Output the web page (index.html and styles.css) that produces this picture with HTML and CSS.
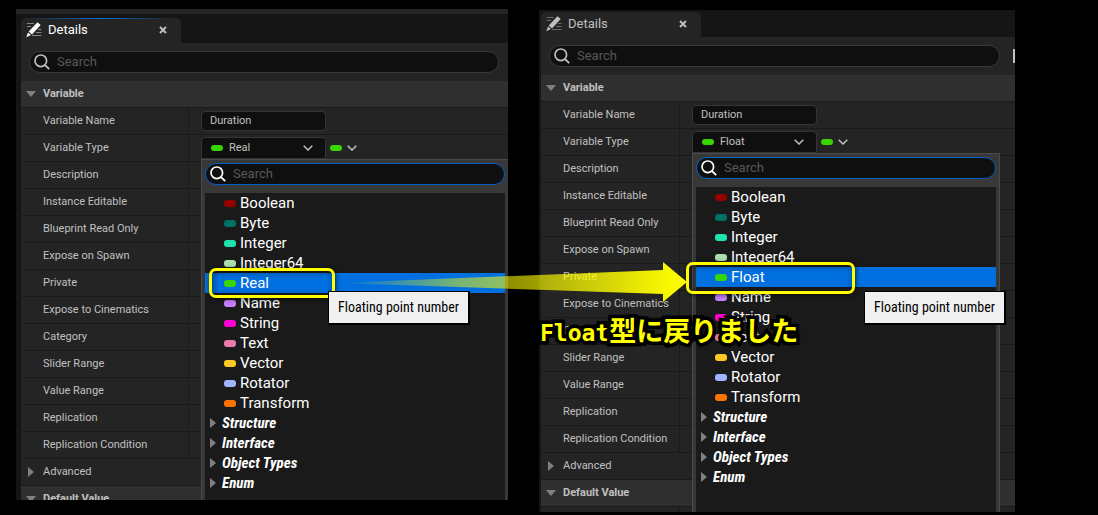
FILE: index.html
```html
<!DOCTYPE html>
<html lang="en">
<head>
<meta charset="utf-8">
<title>Details panels</title>
<link rel="stylesheet" href="styles.css">
<script src="panels.js" defer></script>
</head>
<body>
<svg class="symbols" aria-hidden="true">
  <symbol id="i-details" viewBox="0 0 16 16">
    <path d="M1 1.5h7M1 4.5h4M12 7.5h3.500M10 10.500h5.500M6 13.500h9.500" stroke="currentColor" stroke-width="1.100" opacity=".45"/>
    <path d="M11.500 .2l3.200 2.800-8.700 9.500-3.300-2.900zM2 10.400l3 2.600L.3 15.200z" fill="currentColor"/>
  </symbol>
  <symbol id="i-search" viewBox="0 0 16 16">
    <circle cx="6.800" cy="6.800" r="5.800" fill="none" stroke="currentColor" stroke-width="1.700"/>
    <path d="M10.800 10.800L15.200 15.200" stroke="currentColor" stroke-width="1.900"/>
  </symbol>
  <symbol id="i-close" viewBox="0 0 8 8">
    <path d="M1 1l6 6M7 1L1 7" stroke="currentColor" stroke-width="1.900"/>
  </symbol>
  <symbol id="i-chevron" viewBox="0 0 10 6">
    <path d="M.7.7L5 5 9.300.7" fill="none" stroke="currentColor" stroke-width="1.500"/>
  </symbol>
</svg>
<main class="stage">
  <section class="shot shot-before" data-id="before" data-type="Real" aria-label="Before">
    <div class="panel"></div>
    <div class="tooltip" role="tooltip">Floating point number</div>
  </section>
  <section class="shot shot-after" data-id="after" data-type="Float" aria-label="After">
    <div class="panel"></div>
    <svg class="arrow" viewBox="0 0 352 42" aria-hidden="true">
      <defs>
        <linearGradient id="fade" x1="0" x2="1" y1="0" y2="0">
          <stop offset="0" stop-color="#ff0" stop-opacity="0"/>
          <stop offset=".35" stop-color="#ff0" stop-opacity=".48"/>
          <stop offset=".55" stop-color="#ff0" stop-opacity=".6"/>
          <stop offset=".93" stop-color="#ff0" stop-opacity=".96"/>
          <stop offset="1" stop-color="#ff0"/>
        </linearGradient>
      </defs>
      <path d="M0 22L327 9V1L351 21 327 41V33z" fill="url(#fade)"/>
    </svg>
    <div class="tooltip" role="tooltip">Floating point number</div>
    <p class="caption" lang="ja"><span class="latin">Float</span><span>型に戻りました</span></p>
  </section>
</main>
</body>
</html>
```
FILE: panels.js
```js
const properties = ["Description", "Instance Editable", "Blueprint Read Only", "Expose on Spawn",
  "Private", "Expose to Cinematics", "Category", "Slider Range", "Value Range", "Replication",
  "Replication Condition"];
const groups = ["Structure", "Interface", "Object Types", "Enum"];

const icon = (name) => `<svg class="icon icon-${name}" aria-hidden="true"><use href="#i-${name}"/></svg>`;
const pin = (kind) => `<span class="pin pin-${kind}"></span>`;

const searchBox = (id, label) => `
  <div class="search">${icon("search")}
    <input id="${id}" type="text" placeholder="Search" aria-label="${label}">
  </div>`;

function menu(id, type) {
  const types = ["Boolean", "Byte", "Integer", "Integer64", type, "Name", "String", "Text",
    "Vector", "Rotator", "Transform"];
  const options = types.map((t) => {
    const kind = t === type ? "real" : t.toLowerCase();
    const on = t === type;
    return `<li class="option${on ? " selected" : ""}" role="option" aria-selected="${on}">
      ${pin(kind)}${t}${on ? '<span class="highlight"></span>' : ""}</li>`;
  }).join("");
  const rest = groups.map((g) => `<li class="group" role="option" aria-selected="false"><span class="tri-right"></span>${g}</li>`).join("");
  return `<div class="menu">${searchBox(id + "-types", "Search types")}
    <ul class="options" role="listbox" aria-label="Variable types">${options}${rest}</ul></div>`;
}

function panel(id, type) {
  const row = (label, value = "") => `<div class="row">${label}<div class="value">${value}</div></div>`;
  return `
  <header class="tabs"><div class="tab">${icon("details")}<span>Details</span>
    <button class="close" type="button" aria-label="Close">${icon("close")}</button></div></header>
  <div class="toolbar">${searchBox(id + "-search", "Search details")}<span class="view-button"></span></div>
  <h2 class="category"><span class="tri-down"></span>Variable</h2>
  ${row(`<label class="name" for="${id}-name">Variable Name</label>`,
    `<input class="text-field" id="${id}-name" type="text" value="Duration">`)}
  ${row(`<label class="name" for="${id}-type">Variable Type</label>`,
    `<div class="type-picker">
      <button class="combo" id="${id}-type" type="button" aria-haspopup="listbox" aria-expanded="true">
        ${pin("real")}<span class="combo-text">${type}</span>${icon("chevron")}</button>
      ${menu(id, type)}
    </div>
    <button class="container-type" type="button" aria-label="Container type">${pin("real")}${icon("chevron")}</button>`)}
  ${properties.map((p) => row(`<span class="name">${p}</span>`)).join("")}
  <div class="row advanced"><span class="tri-right"></span>Advanced</div>
  <h2 class="category"><span class="tri-down"></span>Default Value</h2>
  ${row('<span class="name"></span>')}`;
}

document.querySelectorAll(".shot").forEach((shot) => {
  shot.querySelector(".panel").innerHTML = panel(shot.dataset.id, shot.dataset.type);
});
```
FILE: styles.css
```css
* { box-sizing: border-box; }

body {
  margin: 0;
  background: #000;
  color: #c0c0c0;
  font: 11px/16px Roboto, "Noto Sans", sans-serif;
}

button, input { font: inherit; color: inherit; margin: 0; padding: 0; border: 0; background: none; }
.symbols { display: none; }

.stage {
  display: grid;
  grid-template-columns: 492fr 476fr;
  gap: 31px;
  height: 100vh;
  padding: 0 83px 0 16px;
  overflow: hidden;
}
.shot { position: relative; min-width: 0; min-height: 0; display: flex; }
.shot-before { padding: 9px 0 15px; }
.shot-after { padding: 10px 0 3px; }

.panel { flex: 1; min-width: 0; overflow: hidden; background: #151515; }
.shot-before .panel { padding-left: 5px; border-top: 5px solid #242424; }
.shot-after .panel { padding-left: 2px; }

/* Tabs */
.tabs { padding-top: 4px; }
.shot-after .tabs { padding-top: 2px; }
.tab {
  display: flex;
  align-items: center;
  gap: 6px;
  width: 160px;
  height: 25px;
  padding: 0 14px 2px 5px;
  border-radius: 5px 5px 0 0;
  background: #242424;
  font-size: 13px;
}
.shot-before .tab {
  color: #fff;
  background: linear-gradient(90deg, #242424 5%, #0070e0 50%, #242424 95%) top / 100% 1px no-repeat, #242424;
}
.close { margin-left: auto; display: flex; color: #c0c0c0; }

.icon { display: block; flex: none; }
.icon-details, .icon-search { width: 16px; height: 16px; }
.icon-close { width: 8px; height: 8px; }
.icon-chevron { width: 10px; height: 6px; }

/* Search */
.toolbar { display: flex; align-items: center; padding: 8px 9px 8px 8px; background: #242424; }
.toolbar .search { flex: 1; }
.search {
  display: flex;
  align-items: center;
  gap: 7px;
  height: 22px;
  padding: 0 10px 0 4px;
  border: 1px solid #383838;
  border-radius: 11px;
  background: #0f0f0f;
}
.search input { flex: 1; min-width: 0; height: 18px; padding-bottom: 2px; font-size: 13px; outline: 0; }
.search input::placeholder { color: #575757; opacity: 1; }
.view-button { display: none; }
.shot-after .toolbar { padding-right: 0; }
.shot-after .view-button { display: block; width: 2px; height: 14px; margin-left: 13px; background: #c0c0c0; }

/* Property rows */
.category, .row { display: flex; align-items: center; height: 27px; margin: 0; border-bottom: 1px solid #1a1a1a; }
.category { gap: 7px; padding-left: 5px; background: #2f2f2f; font-size: 11px; font-weight: 700; }
.row { background: #242424; }
.name {
  display: flex;
  align-items: center;
  flex: none;
  width: 168px;
  height: 26px;
  padding-left: 22px;
  border-right: 1px solid #1a1a1a;
  white-space: nowrap;
}
.shot-after .name { width: 139px; }
.value { display: flex; align-items: center; gap: 4px; padding-left: 12px; }
.advanced { gap: 9px; padding-left: 7px; }
.tri-down { border: 5px solid transparent; border-top: 6px solid #808080; border-bottom: 0; }
.tri-right { border: 5px solid transparent; border-left: 6px solid #808080; border-right: 0; }

.text-field { width: 125px; height: 20px; padding: 0 8px 2px; border: 1px solid #353535; border-radius: 4px; background: #0f0f0f; }
.type-picker { position: relative; }
.combo {
  display: flex;
  align-items: center;
  gap: 6px;
  width: 125px;
  height: 22px;
  padding: 0 12px 0 9px;
  border: 1px solid #353535;
  border-radius: 4px 4px 0 0;
  background: #0f0f0f;
}
.combo-text { flex: 1; text-align: left; }
.container-type { display: flex; align-items: center; gap: 5px; }

/* Type menu */
.menu {
  position: absolute;
  z-index: 1;
  top: 100%;
  left: 0;
  width: 308px;
  padding: 3px;
  border: 1px solid #4a4a4a;
  background: #383838;
}
.menu .search { width: 300px; border-color: #0060c8; color: #fff; }
.options { width: 300px; min-height: 360px; margin: 8px 0 0; padding: 0; list-style: none; background: #1a1a1a; color: #fff; font-size: 15px; line-height: 20px; }
.option, .group { display: flex; align-items: center; height: 20px; }
.option { gap: 4px; padding-left: 19px; }
.group { gap: 6px; padding-left: 5px; font-family: "Roboto Condensed", Roboto, sans-serif; font-size: 15px; font-style: italic; font-weight: 700; }
.selected { position: relative; background: #0070e0; }

.pin { flex: none; width: 12px; height: 6px; border-radius: 3px; }
.option .pin { height: 7px; }
.pin-real { background: #38d500; }
.pin-boolean { background: #950000; }
.pin-byte { background: #007065; }
.pin-integer { background: #1fe3af; }
.pin-integer64 { background: #acdeaf; }
.pin-name { background: #c880ff; }
.pin-string { background: #ff00d4; }
.pin-text { background: #e77caa; }
.pin-vector { background: #ffc823; }
.pin-rotator { background: #a0b4ff; }
.pin-transform { background: #ff7300; }

/* Annotations */
.highlight {
  position: absolute;
  top: -5px;
  left: 4px;
  width: 126px;
  height: 30px;
  border: 3px solid #ff0;
  border-radius: 7px;
  box-shadow: 1px 1px 5px rgba(0, 0, 0, .6), inset 1px 1px 6px rgba(0, 0, 0, .5);
}
.shot-after .highlight { left: -10px; width: 169px; height: 32px; }
.tooltip {
  position: absolute;
  z-index: 2;
  top: 291px;
  left: 312px;
  padding: 8px 9px;
  border: 1px solid #000;
  border-width: 1px 2px 2px 1px;
  background: #f0f0f0;
  color: #000;
  font-family: "Roboto Condensed", Roboto, sans-serif;
  font-size: 14px;
  line-height: 15px;
  white-space: nowrap;
}
.shot-after .tooltip { left: 325px; }
.arrow { position: absolute; z-index: 2; top: 261px; left: -203px; width: 352px; height: 42px; }
.caption {
  position: absolute;
  z-index: 3;
  top: 312px;
  left: 1px;
  display: flex;
  align-items: baseline;
  margin: 0;
  color: #ff0;
  font: 700 27px/36px "Noto Sans CJK JP", sans-serif;
  white-space: nowrap;
  -webkit-text-stroke: 7px #000;
  paint-order: stroke fill;
  text-shadow: 1px 1px 5px #000;
}
.latin { font: 700 23px/36px "DejaVu Sans Mono", monospace; }
```
